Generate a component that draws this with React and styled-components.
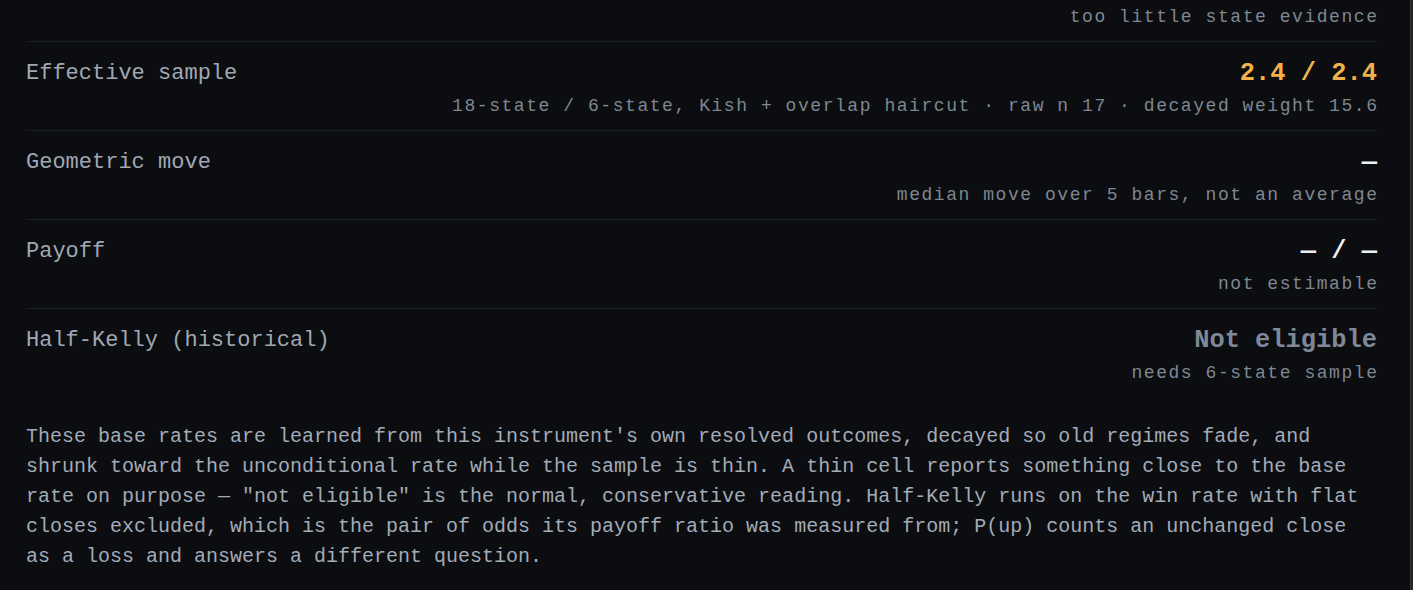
import React from 'react'
import styled, { createGlobalStyle } from 'styled-components'

const GlobalStyle = createGlobalStyle`
html, body {
  margin:0;
  padding:0;
  background:#0b0d10;
  height:100%;
  overflow:hidden;
}
#root {
  height:100%;
}
`

const Page = styled.div`
display:flex;
height:100%;
font-family:"Liberation Mono", "DejaVu Sans Mono", monospace;
`
const Panel = styled.div`
flex:1;
padding:0 33px 0 26px;
background:#0b0d10;
`
const Gutter = styled.div`
width:2px;
background:#222428;
border-left:1px solid #2e3135;
`
// list is scrolled: the first row's heading sits above the visible area
const List = styled.div`
margin-top:-47px;
`
const Row = styled.div`
padding:14px 0 11px;
border-bottom:1px solid ${props=>props.last?'transparent':'#1b1e22'};
`
const Main = styled.div`
display:flex;
justify-content:space-between;
align-items:center;
height:34px;
`
const Label = styled.span`
font-size:22px;
color:#a0a8b3;
`
const Value = styled.span`
font-size:25.4px;
font-weight:700;
color:${props=>props.tone==='amber'?'#f2b24a':props.tone==='muted'?'#7e8898':'#eceef0'};
`
const Sub = styled.div`
margin-top:3px;
height:26px;
line-height:26px;
text-align:right;
font-size:18px;
letter-spacing:1.55px;
margin-right:-1.5px;
color:#7f8791;
`
const Note = styled.p`
margin:24px 0 0;
font-size:20px;
line-height:30px;
color:#a3abb6;
`

const rows = [
  { label: '', value: '', sub: 'too little state evidence' },
  { label: 'Effective sample', value: '2.4 / 2.4', tone: 'amber', sub: '18-state / 6-state, Kish + overlap haircut · raw n 17 · decayed weight 15.6' },
  { label: 'Geometric move', value: '—', sub: 'median move over 5 bars, not an average' },
  { label: 'Payoff', value: '— / —', sub: 'not estimable' },
  { label: 'Half-Kelly (historical)', value: 'Not eligible', tone: 'muted', sub: 'needs 6-state sample' },
]

const App = () => {
  return (
    <Page>
      <GlobalStyle />
      <Panel>
        <List>
          {rows.map((row, i) => (
            <Row key={row.sub} last={i === rows.length - 1}>
              <Main>
                <Label>{row.label}</Label>
                <Value tone={row.tone}>{row.value}</Value>
              </Main>
              <Sub>{row.sub}</Sub>
            </Row>
          ))}
        </List>
        <Note>
          These base rates are learned from this instrument's own resolved outcomes, decayed so old regimes fade, and shrunk toward the unconditional rate while the sample is thin. A thin cell reports something close to the base rate on purpose — "not eligible" is the normal, conservative reading. Half-Kelly runs on the win rate with flat closes excluded, which is the pair of odds its payoff ratio was measured from; P(up) counts an unchanged close as a loss and answers a different question.
        </Note>
      </Panel>
      <Gutter />
    </Page>
  )
}

export default App
